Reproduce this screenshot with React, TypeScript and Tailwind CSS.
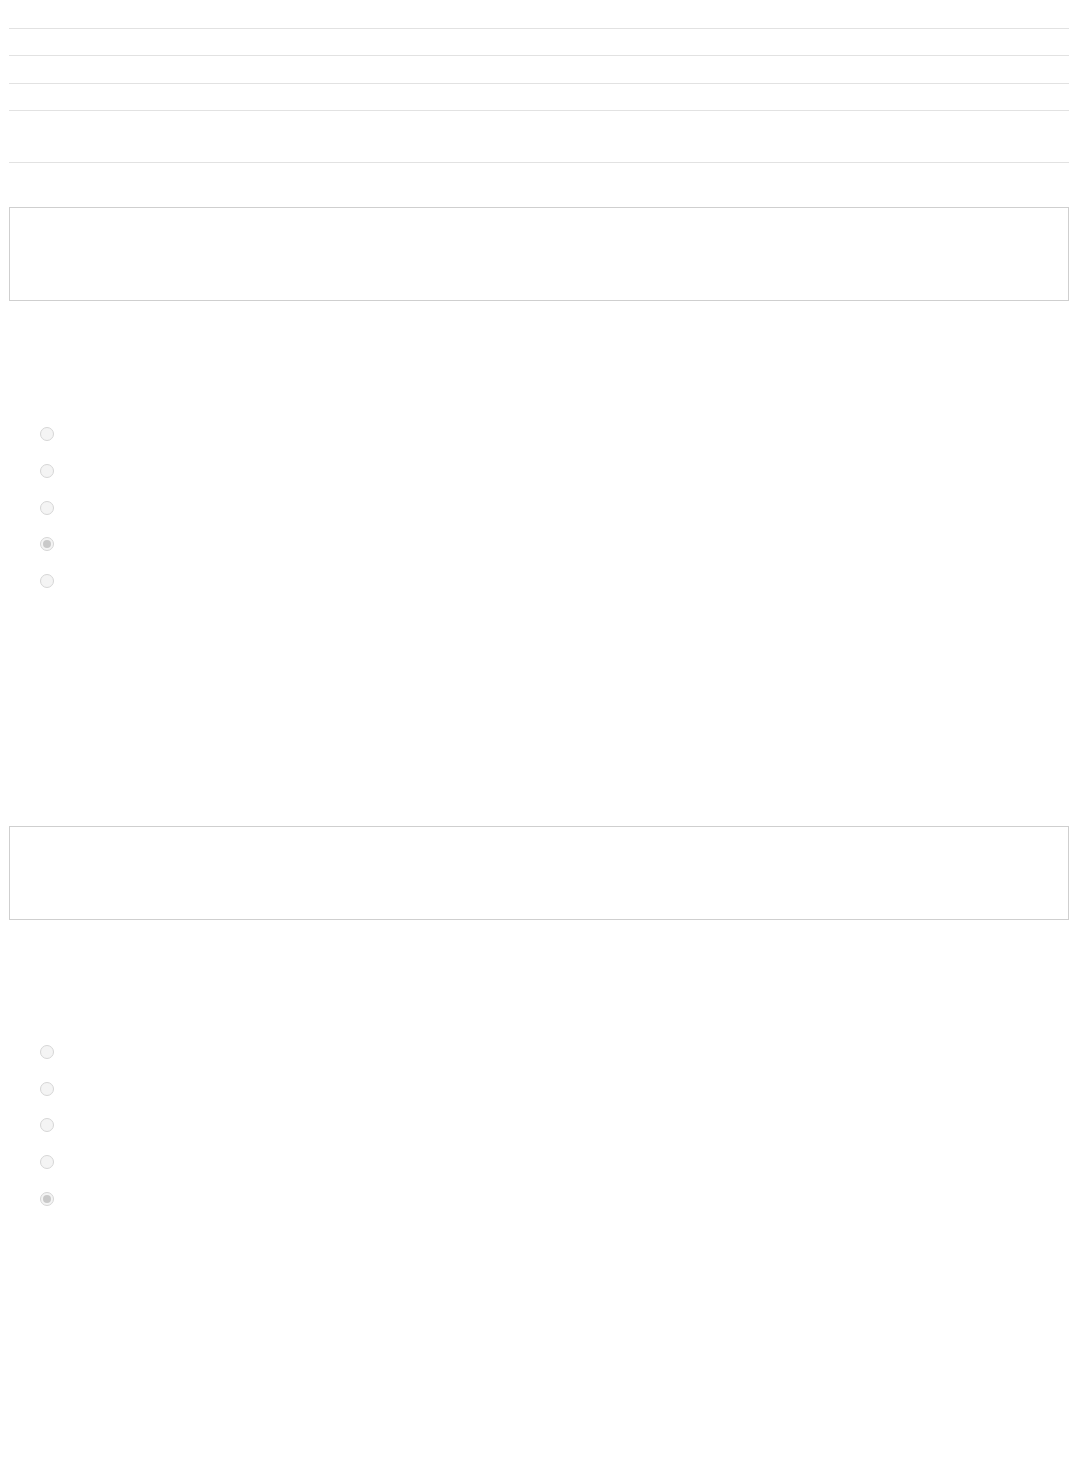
import React from "react";

function Radio({ checked = false }: { checked?: boolean }) {
  return (
    <span className="flex h-[14px] w-[14px] items-center justify-center rounded-full border border-[#d6d6d6] bg-[#f4f4f4]">
      {checked && <span className="h-[8px] w-[8px] rounded-full bg-[#c9c9c9]" />}
    </span>
  );
}

function RadioGroup({ checkedIndex, heights }: { checkedIndex: number; heights: string[] }) {
  return (
    <div className="flex flex-col pl-[31px]">
      {heights.map((h, i) => (
        <div key={i} className={`flex items-center ${h}`}>
          <Radio checked={i === checkedIndex} />
        </div>
      ))}
    </div>
  );
}

export default function App() {
  return (
    <div className="min-h-[1481px] bg-white px-[9px]" style={{ fontFamily: "'Liberation Sans', Arial, sans-serif" }}>
      {/* header rows */}
      <div className="h-[29px] border-b border-[#e2e2e2]" />
      <div className="h-[27px] border-b border-[#e2e2e2]" />
      <div className="h-[28px] border-b border-[#e2e2e2]" />
      <div className="h-[27px] border-b border-[#e2e2e2]" />
      <div className="h-[52px] border-b border-[#e2e2e2]" />

      {/* first block */}
      <div className="mt-[44px] h-[94px] border border-[#cfcfcf]" />
      <div className="mt-[114px]">
        <RadioGroup checkedIndex={3} heights={["h-[37px]", "h-[37px]", "h-[37px]", "h-[36px]", "h-[37px]"]} />
      </div>

      {/* second block */}
      <div className="mt-[227px] h-[94px] border border-[#cfcfcf]" />
      <div className="mt-[113px]">
        <RadioGroup checkedIndex={4} heights={["h-[37px]", "h-[37px]", "h-[36px]", "h-[37px]", "h-[37px]"]} />
      </div>
    </div>
  );
}
